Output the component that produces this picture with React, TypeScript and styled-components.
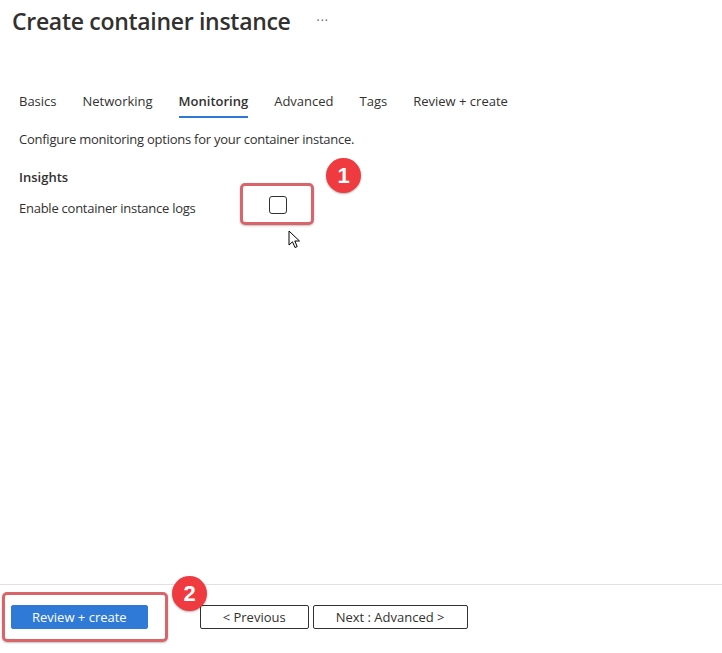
import styled, { createGlobalStyle } from "styled-components";

const GlobalStyle = createGlobalStyle`
    html, body {
        margin: 0;
        padding: 0;
        background: #ffffff;
    }
    body {
        font-family: "Segoe UI", "Open Sans", "Noto Sans", sans-serif;
        color: #323130;
    }
`;

const Page = styled.div`
    display: flex;
    flex-direction: column;
    height: 653px;
    width: 722px;
    overflow: hidden;
`;

const Main = styled.div`
    flex: 1;
    display: flex;
    flex-direction: column;
`;

const TitleBar = styled.div`
    display: flex;
    align-items: center;
    height: 42px;
    padding-left: 12px;
`;

const Title = styled.h1`
    margin: 0;
    font-size: 23px;
    font-weight: 600;
    letter-spacing: -0.3px;
    color: #323130;
`;

const More = styled.span`
    margin-left: 26px;
    margin-top: -2px;
    font-size: 12px;
    color: #605e5c;
    letter-spacing: 1px;
`;

const Tabs = styled.ul`
    display: flex;
    gap: 26px;
    list-style: none;
    margin: 49px 0 0;
    padding: 0 0 0 19px;
`;

const Tab = styled.li<{ $active?: boolean }>`
    font-size: 13px;
    line-height: 20px;
    padding-bottom: 5px;
    border-bottom: 2px solid ${(p) => (p.$active ? "#2f78d4" : "transparent")};
    font-weight: ${(p) => (p.$active ? 600 : 400)};
    color: #323130;
`;

const Description = styled.p`
    margin: 12px 0 0 19px;
    font-size: 13px;
    line-height: 18px;
    letter-spacing: -0.25px;
`;

const SectionTitle = styled.h2`
    margin: 20px 0 0 19px;
    font-size: 13px;
    line-height: 18px;
    font-weight: 600;
`;

const FieldRow = styled.div`
    display: grid;
    grid-template-columns: 250px auto;
    align-items: center;
    margin: 7px 0 0 19px;
`;

const Label = styled.label`
    font-size: 13px;
    line-height: 18px;
    padding-top: 6px;
    letter-spacing: -0.25px;
`;

const CheckboxWrap = styled.div`
    position: relative;
    width: 18px;
    height: 18px;
`;

const CheckboxBox = styled.span`
    display: block;
    box-sizing: border-box;
    width: 18px;
    height: 18px;
    border: 1px solid #323130;
    border-radius: 3px;
    background: #fff;
`;

const Highlight = styled.div<{ $top: number; $left: number; $w: number; $h: number }>`
    position: absolute;
    top: ${(p) => p.$top}px;
    left: ${(p) => p.$left}px;
    width: ${(p) => p.$w}px;
    height: ${(p) => p.$h}px;
    box-sizing: border-box;
    border: 3px solid #d9656a;
    border-radius: 5px;
    box-shadow: 0 1px 2px rgba(0, 0, 0, 0.25);
    pointer-events: none;
`;

const Badge = styled.div<{ $top: number; $left: number }>`
    position: absolute;
    top: ${(p) => p.$top}px;
    left: ${(p) => p.$left}px;
    width: 35px;
    height: 35px;
    border-radius: 50%;
    background: #ef3b40;
    box-shadow: 0 1px 2px rgba(0, 0, 0, 0.3);
    color: #fff;
    font-family: "Liberation Sans", Arial, sans-serif;
    font-weight: 700;
    font-size: 22px;
    display: flex;
    align-items: center;
    justify-content: center;
`;

const Cursor = styled.svg`
    position: absolute;
    top: 34px;
    left: 19px;
`;

const Footer = styled.div`
    position: relative;
    border-top: 1px solid #e1e1e1;
    height: 69px;
    display: flex;
    align-items: flex-start;
    padding: 20px 0 0 11px;
    box-sizing: border-box;
`;

const Button = styled.button<{ $primary?: boolean }>`
    height: 24px;
    box-sizing: border-box;
    padding: 0 ${(p) => (p.$primary ? "20px" : "22px")};
    font-family: inherit;
    font-size: 13px;
    border-radius: 2px;
    border: 1px solid ${(p) => (p.$primary ? "#2f7ad6" : "#323130")};
    background: ${(p) => (p.$primary ? "#2f7ad6" : "#ffffff")};
    color: ${(p) => (p.$primary ? "#ffffff" : "#323130")};
    cursor: pointer;
`;

const PrimaryWrap = styled.div`
    position: relative;
    margin-right: 52px;
`;

const NavButtons = styled.div`
    display: flex;
    gap: 4px;
`;

export default function App() {
    return (
        <Page>
            <GlobalStyle />
            <Main>
                <TitleBar>
                    <Title>Create container instance</Title>
                    <More>···</More>
                </TitleBar>
                <Tabs>
                    <Tab>Basics</Tab>
                    <Tab>Networking</Tab>
                    <Tab $active>Monitoring</Tab>
                    <Tab>Advanced</Tab>
                    <Tab>Tags</Tab>
                    <Tab>Review + create</Tab>
                </Tabs>
                <Description>Configure monitoring options for your container instance.</Description>
                <SectionTitle>Insights</SectionTitle>
                <FieldRow>
                    <Label>Enable container instance logs</Label>
                    <CheckboxWrap>
                        <CheckboxBox />
                        <Highlight $top={-13} $left={-29} $w={74} $h={42} />
                        <Badge $top={-38} $left={57}>1</Badge>
                        <Cursor width="14" height="20" viewBox="0 0 14 20">
                            <path
                                d="M1 1 L1 15 L4.5 11.8 L7 17.5 L9.2 16.6 L6.8 11 L11.5 11 Z"
                                fill="#ffffff"
                                stroke="#000000"
                                strokeWidth="1"
                                strokeLinejoin="round"
                            />
                        </Cursor>
                    </CheckboxWrap>
                </FieldRow>
            </Main>
            <Footer>
                <PrimaryWrap>
                    <Button $primary>Review + create</Button>
                    <Highlight $top={-13} $left={-9} $w={166} $h={50} />
                    <Badge $top={-29} $left={161}>2</Badge>
                </PrimaryWrap>
                <NavButtons>
                    <Button>&lt; Previous</Button>
                    <Button>Next : Advanced &gt;</Button>
                </NavButtons>
            </Footer>
        </Page>
    );
}
